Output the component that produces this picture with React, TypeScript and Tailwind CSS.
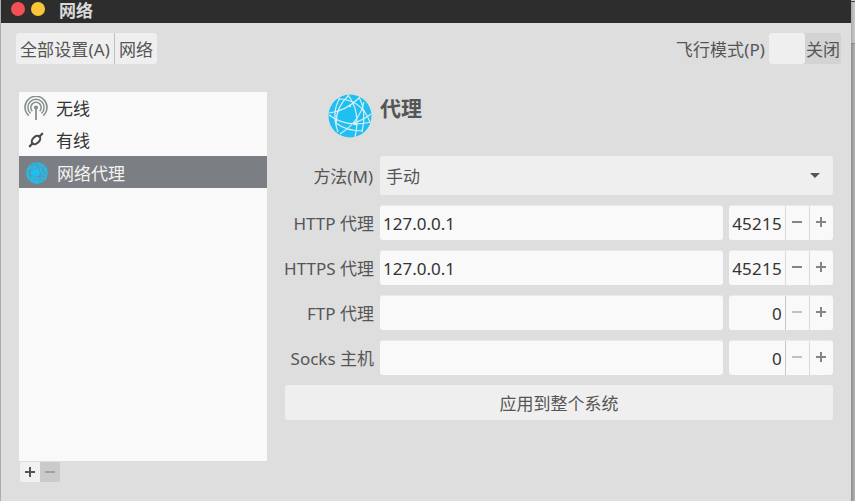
import React from 'react';

function Globe({ size, line }: { size: number; line: string }) {
  return (
    <svg width={size} height={size} viewBox="0 0 44 44" className="shrink-0">
      <circle cx="22" cy="22" r="21.5" fill="#1fc0f1" />
      <g fill="none" stroke={line} strokeWidth="1.2">
        <path d="M1 19Q18 17 31 4" />
        <path d="M10 5Q33 5 42 28" />
        <path d="M12 4Q3 18 10 38" />
        <path d="M20 1Q33 18 27 43" />
        <path d="M21 1Q8 13 8 29" />
        <path d="M31 3Q39 18 34 38" />
        <path d="M1 21Q18 34 43 28" />
        <path d="M36 8Q32 27 12 40" />
        <path d="M8 29Q18 37 35 37" />
        <path d="M43 20Q34 27 25 29" />
      </g>
      <g fill={line}>
        <circle cx="22" cy="12" r="1.2" />
        <circle cx="8" cy="27" r="1.4" />
        <circle cx="27" cy="30" r="1.4" />
        <circle cx="36" cy="17" r="1.1" />
      </g>
    </svg>
  );
}

function Wireless() {
  return (
    <svg width="24" height="24" viewBox="0 0 24 24" fill="none" stroke="#84908e" className="shrink-0">
      <path d="M4.8 19.6A11 11 0 1 1 19.2 19.6" strokeWidth="1.6" />
      <path d="M6.5 17.4A8.1 8.1 0 1 1 17.5 17.4" strokeWidth="1.5" />
      <path d="M8.3 15.2A5.2 5.2 0 1 1 15.7 15.2" strokeWidth="1.5" />
      <path d="M12 12v12" strokeWidth="1.8" />
      <circle cx="12" cy="11.5" r="2.1" fill="#84908e" stroke="none" />
    </svg>
  );
}

function Wired() {
  return (
    <svg width="16" height="16" viewBox="0 0 16 16" fill="none" stroke="#4b4b4b" strokeLinecap="round" className="shrink-0">
      <ellipse cx="8" cy="8" rx="4.9" ry="3.3" transform="rotate(-45 8 8)" strokeWidth="2.1" />
      <path d="M1.8 14.2L4.7 11.3M11.3 4.7L14.2 1.8" strokeWidth="2.3" />
    </svg>
  );
}

function Sign({ plus, color }: { plus?: boolean; color: string }) {
  return (
    <svg width="10" height="10" viewBox="0 0 10 10" shapeRendering="crispEdges" fill={color} className="shrink-0">
      <rect y="4" width="10" height="2" />
      {plus && <rect x="4" width="2" height="10" />}
    </svg>
  );
}

function ProxyRow({ label, host, port }: { label: string; host: string; port: string }) {
  const field = 'h-[35px] rounded-[3px] border-t border-[#eaeaea] bg-[#f9f9f9]';
  return (
    <div className="flex h-[35px]">
      <div className="flex w-[95px] items-center justify-end pt-[2px] pr-[6px] whitespace-nowrap">{label}</div>
      <div className={field + ' w-[343px] pt-[4px] pl-[3px] leading-[28px] text-[#333]'}>{host}</div>
      <div className={field + ' ml-[6px] flex w-[104px]'}>
        <div className="w-[56px] pt-[4px] pr-[3px] text-right leading-[28px] tracking-[0.25px] text-[#333]">{port}</div>
        <div className={'flex w-[24px] border-l pt-[11px] pl-[6px] ' + (port === '0' ? 'border-[#c8c8c8]' : 'border-[#dcdcdc]')}>
          <Sign color={port === '0' ? '#c0c0c0' : '#858585'} />
        </div>
        <div className="flex w-[24px] border-l border-[#dcdcdc] pt-[11px] pl-[6px]">
          <Sign plus color="#858585" />
        </div>
      </div>
    </div>
  );
}

export default function App() {
  return (
    <div className="flex h-[501px] w-[855px] overflow-hidden bg-[#aaa] font-['Noto_Sans','Noto_Sans_CJK_SC',sans-serif] text-[17px] leading-[24px] text-[#555]">
      <div className="w-px bg-[#acacac]" />
      <div className="h-full w-[850px] bg-[#dedede]">
        <div className="flex h-[23px] bg-[#2d2d2d]">
          <div className="mt-[2px] ml-[10px] h-[14px] w-[14px] rounded-full bg-[#f25056]" />
          <div className="mt-[2px] ml-[6px] h-[14px] w-[14px] rounded-full bg-[#fac536]" />
          <div className="ml-[14px] h-[23px] leading-[22px] font-bold text-[#dadada]">网络</div>
        </div>
        <div className="mt-[10px] flex h-[31px] justify-between pr-[10px] pl-[15px] whitespace-nowrap">
          <div className="flex rounded-[3px] bg-[#efefef] leading-[34px]">
            <div className="w-[99px] border-r border-[#c0c0c0] pl-[4px] tracking-[0.12px]">全部设置(A)</div>
            <div className="w-[42px] pl-[4px]">网络</div>
          </div>
          <div className="flex leading-[34px]">
            <div className="pr-[4px] tracking-[0.1px]">飞行模式(P)</div>
            <div className="flex w-[72px] rounded-[3px] bg-[#d3d3d3]">
              <div className="h-[31px] w-[36px] rounded-[3px] bg-[#efefef]" />
              <div className="pl-px">关闭</div>
            </div>
          </div>
        </div>
        <div className="mt-[28px] flex pl-[18px]">
          <div className="w-[248px]">
            <div className="h-[369px] bg-[#f9f9f9] text-[#333]">
              <div className="flex h-[32px] items-center pl-[5px]">
                <Wireless />
                <span className="ml-[8px] pt-[2px]">无线</span>
              </div>
              <div className="flex h-[32px] items-center pl-[9px]">
                <Wired />
                <span className="ml-[12px] pt-[2px]">有线</span>
              </div>
              <div className="flex h-[32px] items-center bg-[#7b7e83] pt-[2px] pl-[7px] text-[#f4f4f4]">
                <Globe size={22} line="#6d8792" />
                <span className="ml-[9px] pt-[2px]">网络代理</span>
              </div>
            </div>
            <div className="mt-px ml-px flex h-[20px] w-[40px] overflow-hidden rounded-[2px]">
              <div className="flex w-[20px] items-center justify-center bg-[#f1f1f1]"><Sign plus color="#555" /></div>
              <div className="flex w-[20px] items-center justify-center bg-[#cacaca]"><Sign color="#a0a0a0" /></div>
            </div>
          </div>
          <div className="ml-[18px] flex w-[548px] flex-col gap-[10px]">
            <div className="flex h-[54px] pt-[2px] pl-[43px]">
              <Globe size={44} line="#d9eef4" />
              <div className="ml-[8px] pt-[2px] text-[21px] font-bold">代理</div>
            </div>
            <div className="flex h-[39px]">
              <div className="flex w-[95px] items-center justify-end pt-[2px] pr-[7px] whitespace-nowrap">方法(M)</div>
              <div className="flex w-[453px] items-center justify-between rounded-[3px] bg-[#efefef] pr-[13px] pl-[6px]">
                <span className="pt-[2px]">手动</span>
                <svg width="10" height="5" viewBox="0 0 10 5" fill="#555"><path d="M0 0H10L5 5Z" /></svg>
              </div>
            </div>
            <ProxyRow label="HTTP 代理" host="127.0.0.1" port="45215" />
            <ProxyRow label="HTTPS 代理" host="127.0.0.1" port="45215" />
            <ProxyRow label="FTP 代理" host="" port="0" />
            <ProxyRow label="Socks 主机" host="" port="0" />
            <div className="h-[35px] rounded-[3px] bg-[#efefef] text-center leading-[37px]">应用到整个系统</div>
          </div>
        </div>
      </div>
      <div className="w-[4px] bg-gradient-to-r from-[#8c8c8c] to-[#b5b5b5]">
        <div className="h-[2px] border-b border-[#444] bg-[#ccc]" />
        <div className="h-[42px] border-b border-[#888] bg-gradient-to-r from-[#aaa] to-[#ccc]" />
      </div>
    </div>
  );
}
